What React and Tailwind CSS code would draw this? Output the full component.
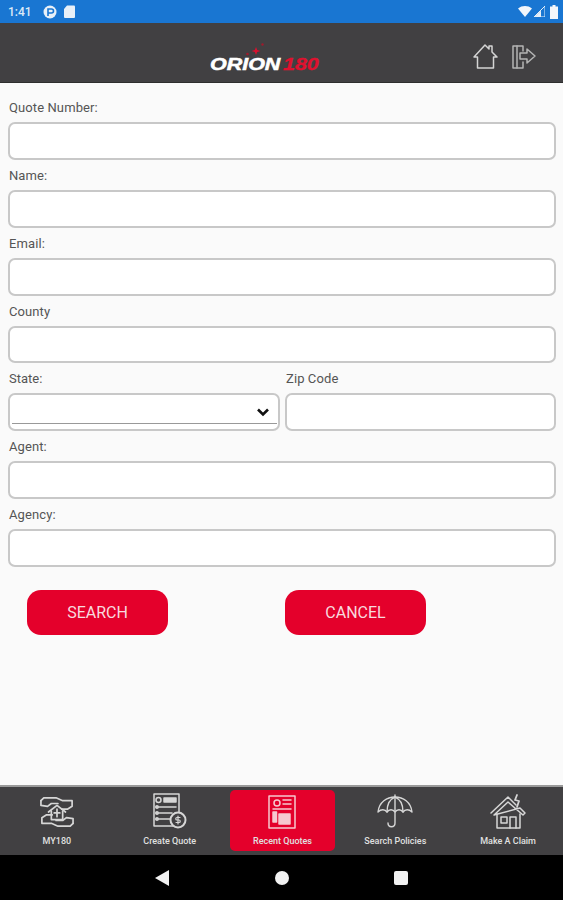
import React from "react";

const stroke = { fill: "none", stroke: "currentColor", strokeWidth: 1.5, strokeLinejoin: "round", strokeLinecap: "round" };

function Field({ label, className = "" }) {
  return (
    <div className={`flex flex-col min-w-0 ${className}`}>
      <label className="h-[30px] pl-px pt-[8px] text-[13px] leading-[16px] text-[#555555] tracking-[0.1px]">{label}</label>
      <div className="h-[37.85px] rounded-[7px] border-2 border-[#c8c8c8] bg-white" />
    </div>
  );
}

function StateField() {
  return (
    <div className="flex flex-col flex-1 min-w-0">
      <label className="h-[30px] pl-px pt-[8px] text-[13px] leading-[16px] text-[#555555]">State:</label>
      <div className="relative h-[37.85px] rounded-[7px] border-2 border-[#c8c8c8] bg-white">
        <div className="absolute left-[2px] right-[1px] bottom-[5px] h-px bg-[#999999]" />
        <svg className="absolute right-[8px] top-[12px]" width="14" height="10" viewBox="0 0 14 10">
          <path d="M2 2.5 L7 7.5 L12 2.5" fill="none" stroke="#111" strokeWidth="2.6" />
        </svg>
      </div>
    </div>
  );
}

const HandsIcon = () => (
  <svg width="36" height="34" viewBox="0 0 38 36" {...stroke} strokeWidth="1.8">
    <path d="M2 6 L5 3 H18 L25 6 H35 V12 L30 15 H24" />
    <path d="M2 6 V11 L9 12 L13 9 H20" />
    <path d="M36 30 L33 33 H20 L13 30 H3 V24 L8 21 H14" />
    <path d="M36 30 V25 L29 24 L25 27 H18" />
    <path d="M10 18 L19 11 L28 18" />
    <path d="M13 17 V26 H25 V17" />
    <path d="M19 15 V23 M16 19 H22" />
  </svg>
);

const QuoteIcon = () => (
  <svg width="36" height="38" viewBox="0 0 36 38" {...stroke} strokeWidth="1.5">
    <path d="M22 33 H2 V1 H27 V19" />
    <circle cx="6.5" cy="7" r="2.5" />
    <rect x="12" y="5" width="12" height="4" fill="currentColor" />
    <path d="M4 14 H24 M4 20 H20 M4 26 H18" />
    <circle cx="5" cy="14" r="1.2" />
    <circle cx="5" cy="20" r="1.2" />
    <circle cx="5" cy="26" r="1.2" />
    <circle cx="26" cy="27" r="7.5" fill="#414042" strokeWidth="2" />
    <path d="M26 23 V31 M28 24.5 H25 A1.2 1.2 0 0 0 25 27 H27 A1.2 1.2 0 0 1 27 29.5 H24" strokeWidth="1.2" />
  </svg>
);

const RecentIcon = () => (
  <svg width="28" height="34" viewBox="0 0 28 34" {...stroke} strokeWidth="1.5">
    <rect x="1" y="1" width="26" height="32" />
    <circle cx="9" cy="8" r="3" />
    <path d="M15 5 H23 M15 9 H23 M5 14 H23" />
    <rect x="5" y="17" width="3.5" height="10" fill="currentColor" />
    <rect x="11" y="19" width="11" height="10" fill="currentColor" />
  </svg>
);

const UmbrellaIcon = () => (
  <svg width="36" height="36" viewBox="0 0 36 36" {...stroke} strokeWidth="1.4">
    <path d="M1 18 C2 8 10 3 18 3 C26 3 34 8 35 18 C32 15 28 15 26 18 C24 15 20 15 18 18 C16 15 12 15 10 18 C8 15 4 15 1 18 Z" />
    <path d="M18 1 V29 C18 34 11 34 11 29" />
    <path d="M10 18 C10 10 13 5 18 3 C23 5 26 10 26 18" />
  </svg>
);

const ClaimIcon = () => (
  <svg width="36" height="36" viewBox="0 0 36 36" {...stroke} strokeWidth="1.5">
    <path d="M1 19 L18 3 L26 11 M30 14 L35 19 L33 21 L18 8 L4 21 Z" />
    <path d="M7 20 V34 H30 V20" />
    <rect x="11" y="23" width="6" height="6" />
    <path d="M20 34 V23 H26 V34" />
    <path d="M27 1 L25 6 L29 7 L27 13" strokeWidth="1.8" />
  </svg>
);

function NavItem({ icon, label, active }) {
  return (
    <div className={`flex flex-col items-center justify-start h-[61px] rounded-[5px] ${active ? "bg-[#e4002b] text-[#f6c8cf]" : "text-[#d6d6d6]"}`}>
      <div className="h-[41px] flex items-center justify-center pt-[3px]">{icon}</div>
      <span className="mt-[4px] text-[9px] leading-[12px] font-medium whitespace-nowrap text-[#e0e0e0]">{label}</span>
    </div>
  );
}

export default function App() {
  return (
    <div className="w-[563px] h-[900px] flex flex-col bg-[#fafafa] overflow-hidden" style={{ fontFamily: "Roboto, sans-serif" }}>
      {/* status bar */}
      <div className="h-[23px] bg-[#1976d2] flex items-center justify-between pl-[8px] pr-[5px] text-[#dbe9f7] shrink-0">
        <div className="flex items-center">
          <span className="text-[12px] font-medium leading-none">1:41</span>
          <svg className="ml-[11px]" width="14" height="14" viewBox="0 0 14 14">
            <circle cx="7" cy="7" r="6.5" fill="#e8f0f8" />
            <path d="M5 11 V4 H8.5 A2 2 0 0 1 8.5 8 H5" fill="none" stroke="#1976d2" strokeWidth="1.6" />
          </svg>
          <svg className="ml-[7px]" width="11" height="13" viewBox="0 0 11 13">
            <path d="M3 0.5 H10 A1 1 0 0 1 11 1.5 V12 A1 1 0 0 1 10 13 H1 A1 1 0 0 1 0 12 V4 Z" fill="#e8f0f8" />
          </svg>
        </div>
        <div className="flex items-center gap-[2px]">
          <svg width="14" height="11" viewBox="0 0 14 11"><path d="M0 2.5 C4 -0.8 10 -0.8 14 2.5 L7 11 Z" fill="#f2f6fb" /></svg>
          <svg width="11" height="11" viewBox="0 0 11 11"><path d="M11 0 V11 H0 Z" fill="none" stroke="#e8f0f8" strokeWidth="1" /><path d="M7 4.5 V11 H0.5 Z" fill="#e8f0f8" /></svg>
          <svg className="ml-[3px]" width="8" height="14" viewBox="0 0 8 14"><path d="M2.5 0 H5.5 V1.5 H8 V14 H0 V1.5 H2.5 Z" fill="#f2f6fb" /></svg>
        </div>
      </div>

      {/* header */}
      <div className="relative h-[60px] bg-[#414042] border-b border-[#2e2e2e] shrink-0">
        <div className="absolute left-[210px] top-[33px] flex leading-none italic font-bold" style={{ fontFamily: "'Liberation Sans', sans-serif" }}>
          <span className="text-[16.5px] text-white inline-block w-[73px] origin-left scale-x-[1.3] [-webkit-text-stroke:0.5px_white]">ORION</span>
          <span className="text-[16.5px] text-[#e0112f] inline-block origin-left scale-x-[1.3] [-webkit-text-stroke:0.3px_#e0112f]">180</span>
        </div>
        <svg className="absolute left-[243px] top-[20px]" width="28" height="16" viewBox="0 0 28 16">
          <path d="M13 4 L14.2 7 L17.5 8 L14.2 9 L13 12 L11.8 9 L8.5 8 L11.8 7 Z" fill="#d8112f" />
          <circle cx="19.5" cy="1.5" r="1.2" fill="#a01a2c" />
          <circle cx="4.5" cy="11" r="1.3" fill="#a01a2c" />
        </svg>
        <div className="absolute left-[473px] top-[21px] text-[#d4d4d4]">
          <svg width="25" height="26" viewBox="0 0 25 26" {...stroke}>
            <path d="M1 13 L12 1 L16 5 V2 H19 V8 L24 13 L20.5 13 V24 H4.5 V13 Z" />
          </svg>
        </div>
        <div className="absolute left-[512px] top-[21px] text-[#b4b4b4]">
          <svg width="25" height="26" viewBox="0 0 25 26" {...stroke}>
            <path d="M11 7 V2 H1 V24 H11 V18" />
            <path d="M5 2 V24 M8 9 H15 V5 L23 12 L15 19 V15 H8 Z" />
          </svg>
        </div>
      </div>

      {/* form */}
      <div className="flex-1 flex flex-col pl-[8px] pr-[7px] pt-[9px]">
        <Field label="Quote Number:" />
        <Field label="Name:" />
        <Field label="Email:" />
        <Field label="County" />
        <div className="flex gap-[5px]">
          <StateField />
          <Field label="Zip Code" className="w-[271px]" />
        </div>
        <Field label="Agent:" />
        <Field label="Agency:" />
        <div className="flex mt-[23px] pl-[19px]">
          <button className="w-[141px] h-[45px] pt-[2px] rounded-[14px] bg-[#e4002b] text-[#f8d9de] text-[16px]">SEARCH</button>
          <button className="ml-[117px] w-[141px] h-[45px] pt-[2px] rounded-[14px] bg-[#e4002b] text-[#f8d9de] text-[16px]">CANCEL</button>
        </div>
      </div>

      {/* bottom nav */}
      <div className="h-[70px] bg-[#414042] border-t-2 border-[#9a9a9a] grid grid-cols-5 gap-x-[7px] pl-[4px] pr-[2px] pt-[3px] shrink-0">
        <NavItem icon={<HandsIcon />} label="MY180" />
        <NavItem icon={<QuoteIcon />} label="Create Quote" />
        <NavItem icon={<RecentIcon />} label="Recent Quotes" active />
        <NavItem icon={<UmbrellaIcon />} label="Search Policies" />
        <NavItem icon={<ClaimIcon />} label="Make A Claim" />
      </div>

      {/* android nav */}
      <div className="h-[45px] bg-black flex items-center shrink-0 pl-[155px]">
        <svg width="14" height="16" viewBox="0 0 14 16"><path d="M14 0 V16 L0 8 Z" fill="#f2f2f2" /></svg>
        <div className="ml-[106px] w-[14px] h-[14px] rounded-full bg-[#f2f2f2]" />
        <div className="ml-[105px] w-[14px] h-[14px] rounded-[2px] bg-[#f2f2f2]" />
      </div>
    </div>
  );
}
